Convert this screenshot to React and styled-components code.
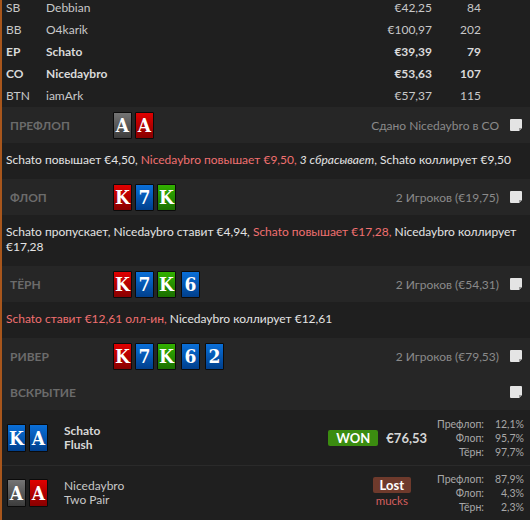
import React from 'react';
import styled, { createGlobalStyle, css } from 'styled-components';

const GlobalStyle = createGlobalStyle`
  html, body {
    margin: 0;
    padding: 0;
    background: #1f1f1f;
  }
  body {
    font-family: Lato, "Open Sans", sans-serif;
    font-size: 12px;
    color: #e2e2e2;
  }
`;

const Page = styled.div`
  width: 530px;
  height: 520px;
  box-sizing: border-box;
  border-left: 2px solid #a8561c;
  overflow: hidden;
  background: #1f1f1f;
`;

const PlayersTable = styled.div`
  margin-top: -4px;
  padding-bottom: 1px;
`;

const PlayerRow = styled.div`
  display: grid;
  grid-template-columns: 40px 1fr 90px 49px;
  align-items: center;
  height: 22px;
  padding: 0 49px 0 4px;
  font-size: 12px;
  color: ${({ $bold }) => ($bold ? '#dadada' : '#c8c8c8')};
  font-weight: ${({ $bold }) => ($bold ? 700 : 400)};
`;

const Right = styled.span`
  text-align: right;
`;

const StreetHeader = styled.div`
  display: flex;
  align-items: center;
  height: 36px;
  padding: 0 7px 0 8px;
  background: #262626;
`;

const StreetLabel = styled.div`
  width: 103px;
  flex-shrink: 0;
  font-weight: 700;
  font-size: 12px;
  color: #6b6b6b;
  text-transform: uppercase;
`;

const Cards = styled.div`
  display: flex;
  align-items: center;
`;

const cardColors = {
  gray: ['#747474', '#3c3c3c'],
  red: ['#e00000', '#870000'],
  blue: ['#0a6fd8', '#003f8c'],
  green: ['#32b000', '#1a6f00'],
};

const Card = styled.div`
  width: 19px;
  height: ${({ $tall }) => ($tall ? 28 : 27)}px;
  box-sizing: border-box;
  margin-left: ${({ $gap }) => $gap}px;
  border: 1px solid #0b0b0b;
  border-radius: 1px;
  display: flex;
  align-items: center;
  justify-content: center;
  font-family: "DejaVu Serif Condensed", "DejaVu Serif", serif;
  font-stretch: condensed;
  font-weight: 700;
  font-size: 19px;
  color: #fff;
  ${({ $color }) => css`
    background: linear-gradient(180deg, ${cardColors[$color][0]}, ${cardColors[$color][1]});
  `}
  &:first-child {
    margin-left: 0;
  }
`;

const HeaderInfo = styled.div`
  margin-left: auto;
  color: #8a8a8a;
  font-size: 12px;
  display: flex;
  align-items: center;
  gap: 10px;
`;

const Action = styled.div`
  padding: 9px 4px 12px 4px;
  line-height: 15px;
  font-size: 12px;
  color: #e4e4e4;
`;

const Red = styled.span`
  color: #f07070;
`;

const ShowRow = styled.div`
  display: flex;
  align-items: center;
  height: 55px;
  box-sizing: border-box;
  padding: 0 6px 0 5px;
  border-top: 1px solid #2a2a2a;
  &:first-of-type {
    border-top: none;
  }
`;

const HandCards = styled(Cards)`
  width: 57px;
  flex-shrink: 0;
`;

const PlayerInfo = styled.div`
  line-height: 14px;
  font-size: 12px;
  font-weight: ${({ $bold }) => ($bold ? 700 : 400)};
  color: ${({ $bold }) => ($bold ? '#d8d8d8' : '#c8c8c8')};
`;

const Result = styled.div`
  margin-left: auto;
  margin-right: ${({ $offset }) => $offset}px;
  display: flex;
  flex-direction: column;
  align-items: center;
`;

const ResultLine = styled.div`
  display: flex;
  align-items: center;
  gap: 8px;
`;

const Badge = styled.div`
  height: 16px;
  padding: 0 ${({ $pad }) => $pad}px;
  border-radius: 2px;
  display: flex;
  align-items: center;
  font-weight: 700;
  font-size: 13px;
  color: #fff;
  background: ${({ $won }) => ($won ? '#3b8c10' : '#6e3a2c')};
`;

const Amount = styled.div`
  font-size: 13px;
  font-weight: 700;
  color: #d6d6d6;
`;

const Mucks = styled.div`
  font-size: 11.5px;
  color: #d45e5e;
  line-height: 16px;
`;

const Stats = styled.div`
  display: grid;
  grid-template-columns: auto 36px;
  column-gap: 4px;
  font-size: 10.5px;
  line-height: 14px;
  color: #a8a8a8;
  & > span {
    text-align: right;
  }
`;

function NoteIcon() {
  return (
    <svg width="14" height="14" viewBox="0 0 14 14">
      <path d="M2 1 H12 Q13 1 13 2 V10 L10 13 H2 Q1 13 1 12 V2 Q1 1 2 1 Z" fill="#e4e4e4" />
      <path d="M13 10 L10 10 L10 13 Z" fill="#9a9a9a" />
    </svg>
  );
}

const PLAYERS = [
  { pos: 'SB', name: 'Debbian', stack: '€42,25', bb: '84' },
  { pos: 'BB', name: 'O4karik', stack: '€100,97', bb: '202' },
  { pos: 'EP', name: 'Schato', stack: '€39,39', bb: '79', bold: true },
  { pos: 'CO', name: 'Nicedaybro', stack: '€53,63', bb: '107', bold: true },
  { pos: 'BTN', name: 'iamArk', stack: '€57,37', bb: '115' },
];

function CardRow({ cards, tall }) {
  return cards.map(([rank, color], i) => (
    <Card key={i} $color={color} $tall={tall} $gap={i >= 3 ? 5 : 3}>
      {rank}
    </Card>
  ));
}

function Street({ label, cards = [], info, note = true }) {
  return (
    <StreetHeader>
      <StreetLabel>{label}</StreetLabel>
      <Cards>
        <CardRow cards={cards} />
      </Cards>
      <HeaderInfo>
        {info && <span>{info}</span>}
        {note && <NoteIcon />}
      </HeaderInfo>
    </StreetHeader>
  );
}

const FLOP = [['K', 'red'], ['7', 'blue'], ['K', 'green']];

export default function App() {
  return (
    <>
      <GlobalStyle />
      <Page>
        <PlayersTable>
          {PLAYERS.map((p) => (
            <PlayerRow key={p.pos} $bold={p.bold}>
              <span>{p.pos}</span>
              <span>{p.name}</span>
              <Right>{p.stack}</Right>
              <Right>{p.bb}</Right>
            </PlayerRow>
          ))}
        </PlayersTable>

        <Street label="Префлоп" cards={[['A', 'gray'], ['A', 'red']]} info="Сдано Nicedaybro в CO" />
        <Action>
          Schato повышает €4,50, <Red>Nicedaybro повышает €9,50,</Red> <i>3 сбрасывает</i>, Schato коллирует €9,50
        </Action>

        <Street label="Флоп" cards={FLOP} info="2 Игроков (€19,75)" />
        <Action>
          Schato пропускает, Nicedaybro ставит €4,94, <Red>Schato повышает €17,28,</Red> Nicedaybro коллирует €17,28
        </Action>

        <Street label="Тёрн" cards={[...FLOP, ['6', 'blue']]} info="2 Игроков (€54,31)" />
        <Action>
          <Red>Schato ставит €12,61 олл-ин,</Red> Nicedaybro коллирует €12,61
        </Action>

        <Street label="Ривер" cards={[...FLOP, ['6', 'blue'], ['2', 'blue']]} info="2 Игроков (€79,53)" />
        <Street label="Вскрытие" />

        <div>
          <ShowRow>
            <HandCards>
              <CardRow cards={[['K', 'blue'], ['A', 'blue']]} tall />
            </HandCards>
            <PlayerInfo $bold>
              <div>Schato</div>
              <div>Flush</div>
            </PlayerInfo>
            <Result $offset={10}>
              <ResultLine>
                <Badge $won $pad={8}>WON</Badge>
                <Amount>€76,53</Amount>
              </ResultLine>
            </Result>
            <Stats>
              <span>Префлоп:</span><span>12,1%</span>
              <span>Флоп:</span><span>95,7%</span>
              <span>Тёрн:</span><span>97,7%</span>
            </Stats>
          </ShowRow>
          <ShowRow>
            <HandCards>
              <CardRow cards={[['A', 'gray'], ['A', 'red']]} tall />
            </HandCards>
            <PlayerInfo>
              <div>Nicedaybro</div>
              <div>Two Pair</div>
            </PlayerInfo>
            <Result $offset={26}>
              <Badge $pad={7}>Lost</Badge>
              <Mucks>mucks</Mucks>
            </Result>
            <Stats>
              <span>Префлоп:</span><span>87,9%</span>
              <span>Флоп:</span><span>4,3%</span>
              <span>Тёрн:</span><span>2,3%</span>
            </Stats>
          </ShowRow>
        </div>
      </Page>
    </>
  );
}
